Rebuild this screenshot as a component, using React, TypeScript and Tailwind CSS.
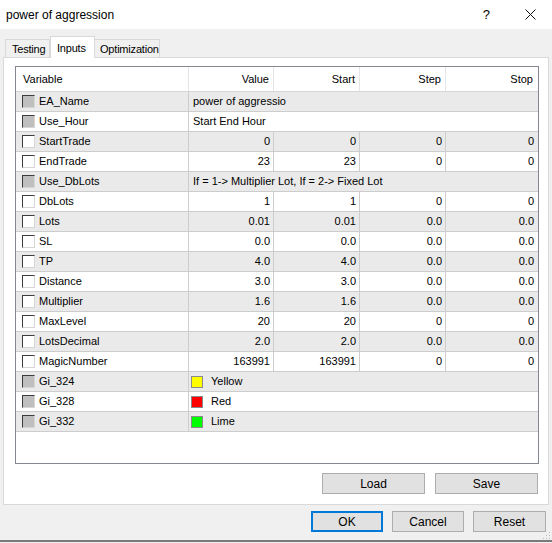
import React from "react";

type Row = {
  name: string;
  kind: "text" | "num" | "color";
  value: string;
  start?: string;
  step?: string;
  stop?: string;
  swatch?: string;
};

const rows: Row[] = [
  { name: "EA_Name", kind: "text", value: "power of aggressio" },
  { name: "Use_Hour", kind: "text", value: "Start End Hour" },
  { name: "StartTrade", kind: "num", value: "0", start: "0", step: "0", stop: "0" },
  { name: "EndTrade", kind: "num", value: "23", start: "23", step: "0", stop: "0" },
  { name: "Use_DbLots", kind: "text", value: "If = 1-> Multiplier Lot, If = 2-> Fixed Lot" },
  { name: "DbLots", kind: "num", value: "1", start: "1", step: "0", stop: "0" },
  { name: "Lots", kind: "num", value: "0.01", start: "0.01", step: "0.0", stop: "0.0" },
  { name: "SL", kind: "num", value: "0.0", start: "0.0", step: "0.0", stop: "0.0" },
  { name: "TP", kind: "num", value: "4.0", start: "4.0", step: "0.0", stop: "0.0" },
  { name: "Distance", kind: "num", value: "3.0", start: "3.0", step: "0.0", stop: "0.0" },
  { name: "Multiplier", kind: "num", value: "1.6", start: "1.6", step: "0.0", stop: "0.0" },
  { name: "MaxLevel", kind: "num", value: "20", start: "20", step: "0", stop: "0" },
  { name: "LotsDecimal", kind: "num", value: "2.0", start: "2.0", step: "0.0", stop: "0.0" },
  { name: "MagicNumber", kind: "num", value: "163991", start: "163991", step: "0", stop: "0" },
  { name: "Gi_324", kind: "color", value: "Yellow", swatch: "#ffff00" },
  { name: "Gi_328", kind: "color", value: "Red", swatch: "#ff0000" },
  { name: "Gi_332", kind: "color", value: "Lime", swatch: "#00ff00" },
];

function CheckBox({ disabled }: { disabled: boolean }) {
  return (
    <span
      className={`inline-block h-[13px] w-[13px] shrink-0 border border-t-[#3c3c3c] border-l-[#3c3c3c] border-r-[#d6d6d6] border-b-[#d6d6d6] ${
        disabled ? "bg-[#bfbfbf]" : "bg-white"
      }`}
    />
  );
}

function WinButton({ label, width, focused }: { label: string; width: string; focused?: boolean }) {
  return (
    <div
      className={`flex h-[21px] items-center justify-center bg-[#e1e1e1] text-[12px] text-black ${width} ${
        focused ? "border-2 border-[#0078d7]" : "border border-[#adadad]"
      }`}
    >
      {label}
    </div>
  );
}

export default function App() {
  return (
    <div className="relative flex h-[543px] w-[552px] flex-col overflow-hidden bg-[#f0f0f0] font-['Liberation_Sans',Arial,sans-serif] text-black">
      {/* Title bar */}
      <div className="flex h-[29px] shrink-0 items-center bg-white pl-[6px] text-[12px]">
        <span>power of aggression</span>
        <span className="ml-auto mr-[35px] text-[13px]">?</span>
        <svg width="11" height="11" viewBox="0 0 11 11" className="mr-[16px]">
          <path d="M0.5 0.5 L10.5 10.5 M10.5 0.5 L0.5 10.5" stroke="#111" strokeWidth="1" />
        </svg>
      </div>

      {/* Tabs */}
      <div className="flex h-[28px] shrink-0 items-end pl-[5px] text-[11px] tracking-[-0.2px]">
        <div className="mb-[-1px] flex h-[19px] w-[45px] items-center border border-b-0 border-[#d9d9d9] bg-[#f0f0f0] pl-[6px]">
          Testing
        </div>
        <div className="relative z-10 mb-[-1px] flex h-[22px] w-[45px] items-start border border-b-0 border-[#d9d9d9] bg-white pl-[6px] pt-[3px]">
          Inputs
        </div>
        <div className="mb-[-1px] flex h-[19px] w-[65px] items-center border border-b-0 border-l-0 border-[#d9d9d9] bg-[#f0f0f0] pl-[5px]">
          Optimization
        </div>
      </div>

      {/* Tab panel */}
      <div className="ml-[3px] flex h-[448px] w-[546px] shrink-0 flex-col border border-[#d9d9d9] bg-white pl-[11px] pt-[8px]">
        <div className="flex h-[398px] w-[524px] flex-col border border-[#828790] bg-white text-[11px]">
          {/* Header */}
          <div className="flex h-[25px] shrink-0 items-center border-b border-[#d5d5d5]">
            <div className="flex h-full w-[173px] items-center border-r border-[#e5e5e5] pl-[7px]">Variable</div>
            <div className="flex h-full w-[85px] items-center justify-end border-r border-[#e5e5e5] pr-[4px]">Value</div>
            <div className="flex h-full w-[86px] items-center justify-end border-r border-[#e5e5e5] pr-[4px]">Start</div>
            <div className="flex h-full w-[86px] items-center justify-end border-r border-[#e5e5e5] pr-[4px]">Step</div>
            <div className="flex h-full w-[92px] items-center justify-end pr-[5px]">Stop</div>
          </div>

          {rows.map((r, i) => (
            <div
              key={r.name}
              className={`flex h-[20px] shrink-0 items-center border-b border-[#cdcdcd] ${
                i % 2 === 0 ? "bg-[#eaeaea]" : "bg-white"
              }`}
            >
              <div className="flex h-full w-[173px] items-center gap-[4px] border-r border-[#cdcdcd] pl-[6px]">
                <CheckBox disabled={r.kind !== "num"} />
                <span>{r.name}</span>
              </div>
              {r.kind === "num" ? (
                <>
                  <div className="flex h-full w-[85px] items-center justify-end border-r border-[#cdcdcd] pr-[3px]">{r.value}</div>
                  <div className="flex h-full w-[86px] items-center justify-end border-r border-[#cdcdcd] pr-[3px]">{r.start}</div>
                  <div className="flex h-full w-[86px] items-center justify-end border-r border-[#cdcdcd] pr-[3px]">{r.step}</div>
                  <div className="flex h-full w-[92px] items-center justify-end pr-[4px]">{r.stop}</div>
                </>
              ) : r.kind === "color" ? (
                <div className="flex h-full flex-1 items-center pl-[2px]">
                  <span
                    className="inline-block h-[12px] w-[12px] border border-[#8a8a8a]"
                    style={{ backgroundColor: r.swatch }}
                  />
                  <span className="pl-[8px]">{r.value}</span>
                </div>
              ) : (
                <div className="flex h-full flex-1 items-center overflow-hidden whitespace-nowrap pl-[4px]">{r.value}</div>
              )}
            </div>
          ))}
        </div>

        <div className="mt-[9px] flex w-[524px] justify-end gap-[10px] pr-[1px]">
          <WinButton label="Load" width="w-[103px]" />
          <WinButton label="Save" width="w-[103px]" />
        </div>
      </div>

      {/* Dialog buttons */}
      <div className="mt-[6px] flex justify-end gap-[9px] pr-[6px]">
        <WinButton label="OK" width="w-[72px]" focused />
        <WinButton label="Cancel" width="w-[72px]" />
        <WinButton label="Reset" width="w-[73px]" />
      </div>

      <div className="mt-auto h-[3px] border-t-2 border-[#7a7a7a] bg-[#f0f0f0]" />

      {/* size grip */}
      <svg width="8" height="8" viewBox="0 0 8 8" className="absolute bottom-[3px] right-[1px]">
        <rect x="6" y="0" width="1" height="1" fill="#b8b8b8" />
        <rect x="3" y="3" width="1" height="1" fill="#b8b8b8" />
        <rect x="6" y="3" width="1" height="1" fill="#b8b8b8" />
        <rect x="0" y="6" width="1" height="1" fill="#b8b8b8" />
        <rect x="3" y="6" width="1" height="1" fill="#b8b8b8" />
        <rect x="6" y="6" width="1" height="1" fill="#b8b8b8" />
      </svg>
    </div>
  );
}
